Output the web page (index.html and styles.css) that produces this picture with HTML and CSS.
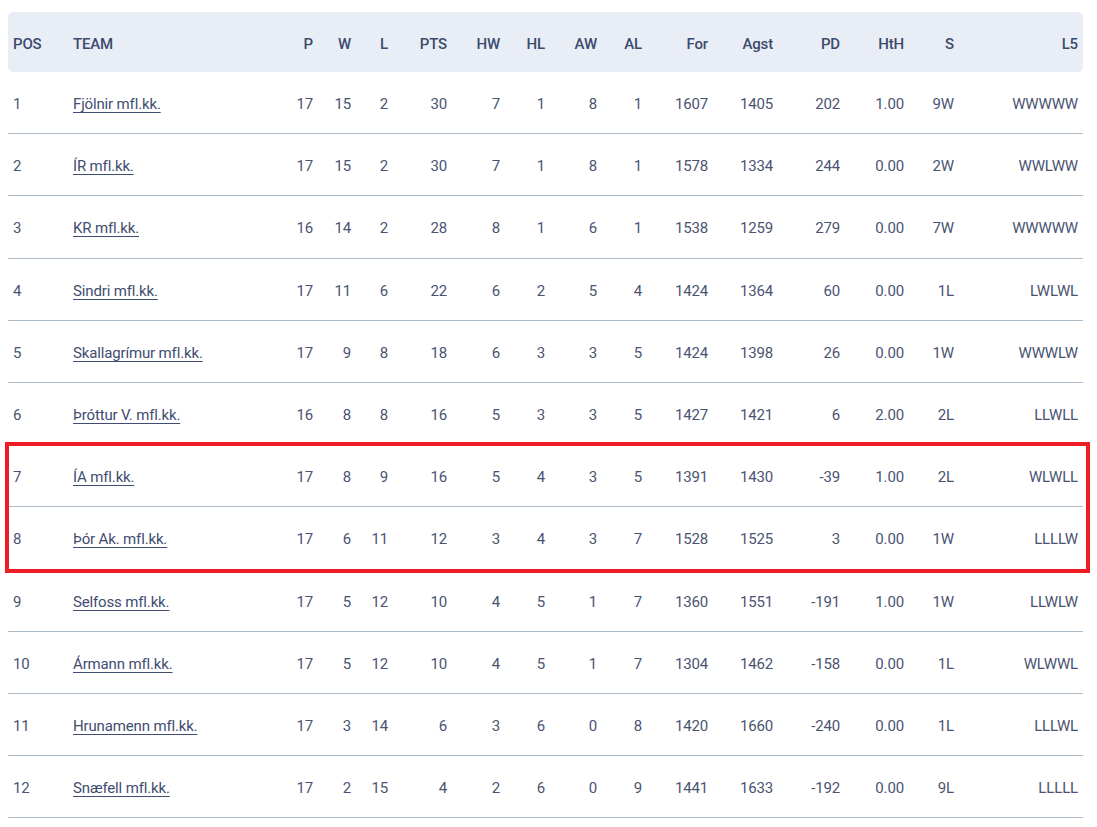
FILE: index.html
```html
<!DOCTYPE html>
<html lang="is">
<head>
<meta charset="utf-8">
<title>Standings</title>
<link rel="stylesheet" href="styles.css">
</head>
<body>
<div class="wrap">
  <table class="standings">
    <colgroup>
      <col class="c-pos"><col class="c-team"><col class="c-p"><col class="c-w"><col class="c-l">
      <col class="c-pts"><col class="c-hw"><col class="c-hl"><col class="c-aw"><col class="c-al">
      <col class="c-for"><col class="c-agst"><col class="c-pd"><col class="c-hth"><col class="c-s"><col class="c-l5">
    </colgroup>
    <thead>
      <tr>
        <th class="left">POS</th><th class="left">TEAM</th><th>P</th><th>W</th><th>L</th>
        <th>PTS</th><th>HW</th><th>HL</th><th>AW</th><th>AL</th>
        <th>For</th><th>Agst</th><th>PD</th><th>HtH</th><th>S</th><th>L5</th>
      </tr>
    </thead>
    <tbody>
      <tr><td class="left">1</td><td class="left"><a href="#">Fjölnir mfl.kk.</a></td><td>17</td><td>15</td><td>2</td><td>30</td><td>7</td><td>1</td><td>8</td><td>1</td><td>1607</td><td>1405</td><td>202</td><td>1.00</td><td>9W</td><td>WWWWW</td></tr>
      <tr><td class="left">2</td><td class="left"><a href="#">ÍR mfl.kk.</a></td><td>17</td><td>15</td><td>2</td><td>30</td><td>7</td><td>1</td><td>8</td><td>1</td><td>1578</td><td>1334</td><td>244</td><td>0.00</td><td>2W</td><td>WWLWW</td></tr>
      <tr><td class="left">3</td><td class="left"><a href="#">KR mfl.kk.</a></td><td>16</td><td>14</td><td>2</td><td>28</td><td>8</td><td>1</td><td>6</td><td>1</td><td>1538</td><td>1259</td><td>279</td><td>0.00</td><td>7W</td><td>WWWWW</td></tr>
      <tr><td class="left">4</td><td class="left"><a href="#">Sindri mfl.kk.</a></td><td>17</td><td>11</td><td>6</td><td>22</td><td>6</td><td>2</td><td>5</td><td>4</td><td>1424</td><td>1364</td><td>60</td><td>0.00</td><td>1L</td><td>LWLWL</td></tr>
      <tr><td class="left">5</td><td class="left"><a href="#">Skallagrímur mfl.kk.</a></td><td>17</td><td>9</td><td>8</td><td>18</td><td>6</td><td>3</td><td>3</td><td>5</td><td>1424</td><td>1398</td><td>26</td><td>0.00</td><td>1W</td><td>WWWLW</td></tr>
      <tr><td class="left">6</td><td class="left"><a href="#">Þróttur V. mfl.kk.</a></td><td>16</td><td>8</td><td>8</td><td>16</td><td>5</td><td>3</td><td>3</td><td>5</td><td>1427</td><td>1421</td><td>6</td><td>2.00</td><td>2L</td><td>LLWLL</td></tr>
      <tr><td class="left">7</td><td class="left"><a href="#">ÍA mfl.kk.</a></td><td>17</td><td>8</td><td>9</td><td>16</td><td>5</td><td>4</td><td>3</td><td>5</td><td>1391</td><td>1430</td><td>-39</td><td>1.00</td><td>2L</td><td>WLWLL</td></tr>
      <tr><td class="left">8</td><td class="left"><a href="#">Þór Ak. mfl.kk.</a></td><td>17</td><td>6</td><td>11</td><td>12</td><td>3</td><td>4</td><td>3</td><td>7</td><td>1528</td><td>1525</td><td>3</td><td>0.00</td><td>1W</td><td>LLLLW</td></tr>
      <tr><td class="left">9</td><td class="left"><a href="#">Selfoss mfl.kk.</a></td><td>17</td><td>5</td><td>12</td><td>10</td><td>4</td><td>5</td><td>1</td><td>7</td><td>1360</td><td>1551</td><td>-191</td><td>1.00</td><td>1W</td><td>LLWLW</td></tr>
      <tr><td class="left">10</td><td class="left"><a href="#">Ármann mfl.kk.</a></td><td>17</td><td>5</td><td>12</td><td>10</td><td>4</td><td>5</td><td>1</td><td>7</td><td>1304</td><td>1462</td><td>-158</td><td>0.00</td><td>1L</td><td>WLWWL</td></tr>
      <tr><td class="left">11</td><td class="left"><a href="#">Hrunamenn mfl.kk.</a></td><td>17</td><td>3</td><td>14</td><td>6</td><td>3</td><td>6</td><td>0</td><td>8</td><td>1420</td><td>1660</td><td>-240</td><td>0.00</td><td>1L</td><td>LLLWL</td></tr>
      <tr><td class="left">12</td><td class="left"><a href="#">Snæfell mfl.kk.</a></td><td>17</td><td>2</td><td>15</td><td>4</td><td>2</td><td>6</td><td>0</td><td>9</td><td>1441</td><td>1633</td><td>-192</td><td>0.00</td><td>9L</td><td>LLLLL</td></tr>
    </tbody>
  </table>
  <div class="highlight" aria-hidden="true"></div>
</div>
</body>
</html>
```
FILE: styles.css
```css
html, body {
  margin: 0;
  padding: 0;
  background: #ffffff;
}

body {
  font-family: Roboto, "Liberation Sans", Arial, sans-serif;
  color: #4a5472;
}

.wrap {
  position: relative;
  padding: 12px 14px 0 8px;
}

.standings {
  width: 1075px;
  border-collapse: separate;
  border-spacing: 0;
  table-layout: fixed;
  font-size: 15px;
  letter-spacing: -0.15px;
}

.c-pos { width: 60px; }
.c-team { width: 210px; }
.c-p { width: 40px; }
.c-w { width: 38px; }
.c-l { width: 37px; }
.c-pts { width: 59px; }
.c-hw { width: 53px; }
.c-hl { width: 45px; }
.c-aw { width: 52px; }
.c-al { width: 45px; }
.c-for { width: 66px; }
.c-agst { width: 65px; }
.c-pd { width: 67px; }
.c-hth { width: 64px; }
.c-s { width: 50px; }
.c-l5 { width: 124px; }

.standings th {
  background: #e9eef6;
  color: #3c4a6c;
  font-weight: 500;
  height: 57px;
  padding: 3px 5px 0;
  text-align: right;
  white-space: nowrap;
}

.standings th:first-child {
  border-radius: 5px 0 0 5px;
}

.standings th:last-child {
  border-radius: 0 5px 5px 0;
}

.standings td {
  height: 58.2px;
  padding: 3px 5px 0;
  text-align: right;
  border-bottom: 1px solid #aebbcb;
  white-space: nowrap;
}

.standings .left {
  text-align: left;
}

.standings a {
  color: #414d70;
  text-decoration: underline;
  text-underline-offset: 3px;
  text-decoration-thickness: 1px;
}

.highlight {
  position: absolute;
  left: 5px;
  top: 442px;
  width: 1077px;
  height: 123px;
  border: 4px solid #ee1c25;
}
```
